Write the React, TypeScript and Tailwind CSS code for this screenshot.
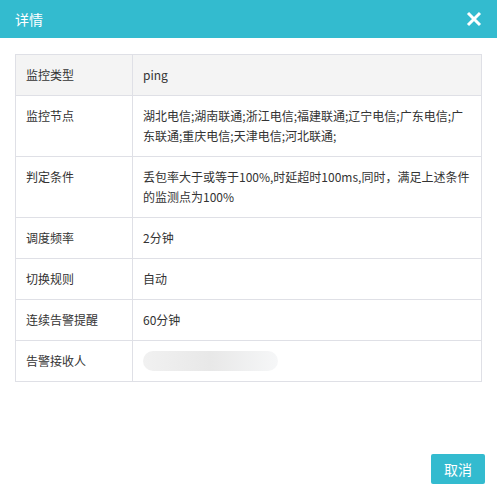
import React from 'react';

const rows: [string, React.ReactNode][] = [
    ['监控类型', 'ping'],
    ['监控节点', '湖北电信;湖南联通;浙江电信;福建联通;辽宁电信;广东电信;广东联通;重庆电信;天津电信;河北联通;'],
    ['判定条件', '丢包率大于或等于100%,时延超时100ms,同时，满足上述条件的监测点为100%'],
    ['调度频率', '2分钟'],
    ['切换规则', '自动'],
    ['连续告警提醒', '60分钟'],
    ['告警接收人', <div className="h-[20px] w-[135px] rounded-full bg-gradient-to-r from-[#f1f1f1] via-[#e8e8e8] to-[#f6f7f8]"/>],
];

const App = () => {
    return (
        <div className="w-[497px] h-[497px] bg-white flex flex-col text-[12px] text-[#333]"
             style={{fontFamily: '"Microsoft YaHei", "Noto Sans CJK SC", sans-serif'}}>
            <div className="h-[38px] bg-[#33bbcf] flex items-center justify-between px-[15px] text-white">
                <span className="text-[14px]">详情</span>
                <svg width="16" height="16" viewBox="0 0 16 16">
                    <path d="M2 2L14 14M14 2L2 14" stroke="white" strokeWidth="3"/>
                </svg>
            </div>
            <div className="px-[15px] pt-[16px] flex-1">
                <table className="w-full border-collapse border border-[#dfe0e6]">
                    <tbody>
                    {rows.map(([k, v], i) => (
                        <tr key={k} className={i === 0 ? 'bg-[#f4f4f4]' : 'bg-white'}>
                            <td className="w-[117px] border border-[#dfe0e6] px-[10px] py-[10px] leading-[20px] align-top">{k}</td>
                            <td className="border border-[#dfe0e6] px-[10px] py-[10px] leading-[20px] align-top">{v}</td>
                        </tr>
                    ))}
                    </tbody>
                </table>
            </div>
            <div className="flex justify-end px-[12px] pb-[13px]">
                <button className="w-[54px] h-[30px] rounded-[2px] bg-[#33bbcf] text-white text-[14px]">取消</button>
            </div>
        </div>
    );
};

export default App;
